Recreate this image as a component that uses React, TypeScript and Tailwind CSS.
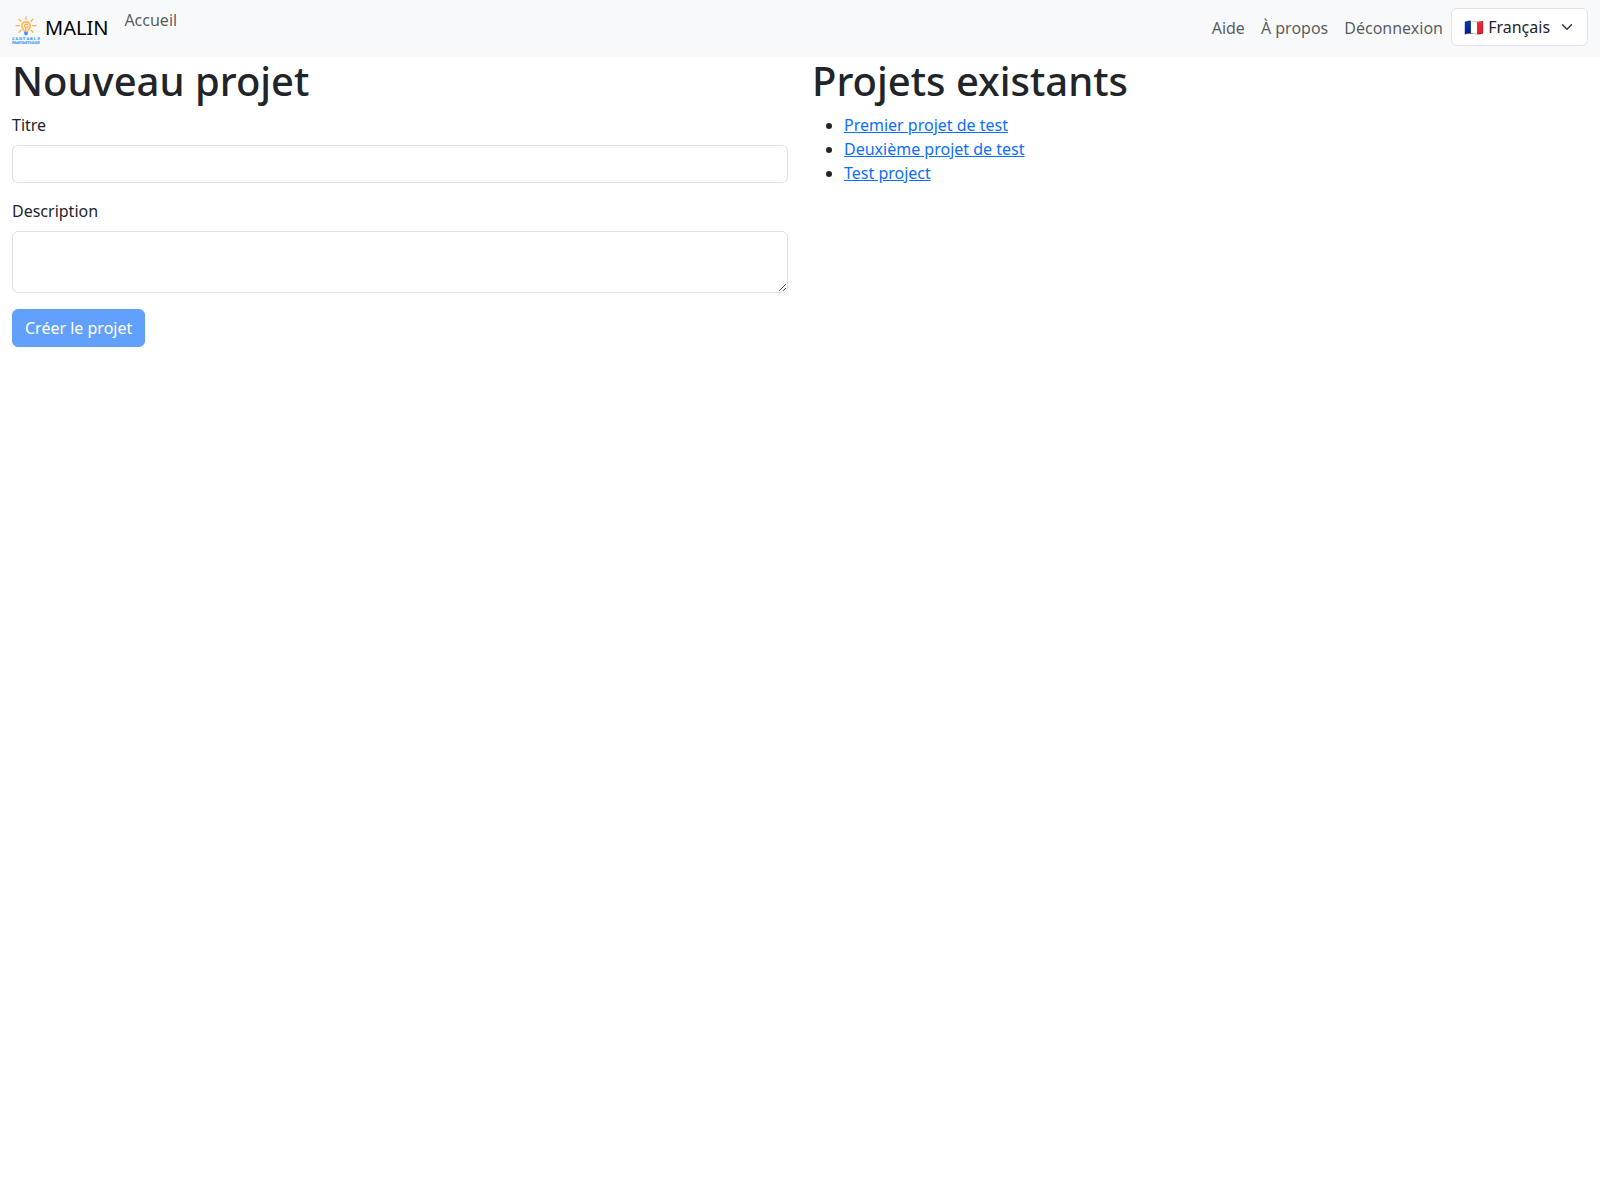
import { useState } from "react";

const projects = ["Premier projet de test", "Deuxième projet de test", "Test project"];

const fieldClass =
  "block w-full rounded-md border border-[#dee2e6] bg-white px-3 text-base text-[#212529]";

function Logo() {
  return (
    <svg viewBox="0 0 280 280" className="size-7" aria-hidden="true">
      <g fill="none" stroke="#fdb045" strokeLinecap="round" strokeWidth="13">
        <path d="M140 8v26M70 32l20 20M210 32l-20 20M40 97h36M204 97h36M70 162l20-20M210 162l-20-20" />
        <path
          d="M122 150c-2-18-24-26-24-50 0-24 18-40 42-40s42 16 42 40-22 32-24 50"
          strokeWidth="15"
        />
        <path d="M160 88c-16-14-38-4-36 12s24 20 36 8M138 116v30" />
      </g>
      <path d="M122 154h36v26l-10 12h-16l-10-12z" fill="#3b93f7" />
      <g
        fill="#4d9ff8"
        stroke="#4d9ff8"
        strokeWidth="2"
        fontFamily="DejaVu Sans, sans-serif"
        fontWeight="700"
      >
        <text x="0 36 72 108 144 180 218 254" y="242" fontSize="35">
          CARTABLE
        </text>
        <text x="0" y="280" fontSize="36">
          FANTASTIQUE
        </text>
      </g>
    </svg>
  );
}

function NavLink({ children }: { children: string }) {
  return (
    <a href="#" className="p-2 text-[#212529]/75">
      {children}
    </a>
  );
}

function LanguageSelect() {
  return (
    <div className="grid items-center">
      <select
        aria-label="Langue"
        className="col-start-1 row-start-1 h-[38px] appearance-none rounded-md border border-[#dee2e6] bg-white pr-9 pl-3 text-base text-[#212529]"
      >
        <option>🇫🇷 Français</option>
      </select>
      <svg
        viewBox="0 0 16 16"
        className="pointer-events-none col-start-1 row-start-1 mr-[13px] h-3 w-4 justify-self-end"
        fill="none"
        stroke="#343a40"
        strokeLinecap="round"
        strokeLinejoin="round"
        strokeWidth="2"
        aria-hidden="true"
      >
        <path d="m2 5 6 6 6-6" />
      </svg>
    </div>
  );
}

export default function App() {
  const [title, setTitle] = useState("");
  const [description, setDescription] = useState("");

  return (
    <div className="min-h-screen bg-white font-['Noto_Sans','Liberation_Sans',sans-serif] text-base text-[#212529]">
      <nav className="flex min-h-[57px] items-start bg-[#f8f9fa] px-3 py-2">
        <a href="#" className="mr-4 flex h-10 items-center gap-[5px] text-xl text-black">
          <span className="pt-1">
            <Logo />
          </span>
          MALIN
        </a>
        <a href="#" className="text-[#212529]/75">
          Accueil
        </a>
        <div className="ml-auto flex items-start">
          <NavLink>Aide</NavLink>
          <NavLink>À propos</NavLink>
          <NavLink>Déconnexion</NavLink>
          <LanguageSelect />
        </div>
      </nav>

      <main className="grid grid-cols-2 gap-6 px-3">
        <section>
          <h1 className="mb-2 text-[40px] leading-[48px] font-medium">Nouveau projet</h1>
          <form onSubmit={(event) => event.preventDefault()}>
            <label htmlFor="title" className="mb-2 block w-fit">
              Titre
            </label>
            <input
              id="title"
              type="text"
              value={title}
              onChange={(event) => setTitle(event.target.value)}
              className={`${fieldClass} mb-4 h-[38px]`}
            />
            <label htmlFor="description" className="mb-2 block w-fit">
              Description
            </label>
            <textarea
              id="description"
              rows={2}
              value={description}
              onChange={(event) => setDescription(event.target.value)}
              className={`${fieldClass} mb-4 resize-y py-1.5`}
            />
            <button
              type="submit"
              disabled={!title}
              className="rounded-md border border-[#0d6efd] bg-[#0d6efd] px-3 py-1.5 text-white disabled:opacity-65"
            >
              Créer le projet
            </button>
          </form>
        </section>

        <section>
          <h1 className="mb-2 text-[40px] leading-[48px] font-medium">Projets existants</h1>
          <ul className="list-disc pl-8">
            {projects.map((project) => (
              <li key={project}>
                <a href="#" className="text-[#0d6efd] underline">
                  {project}
                </a>
              </li>
            ))}
          </ul>
        </section>
      </main>
    </div>
  );
}
